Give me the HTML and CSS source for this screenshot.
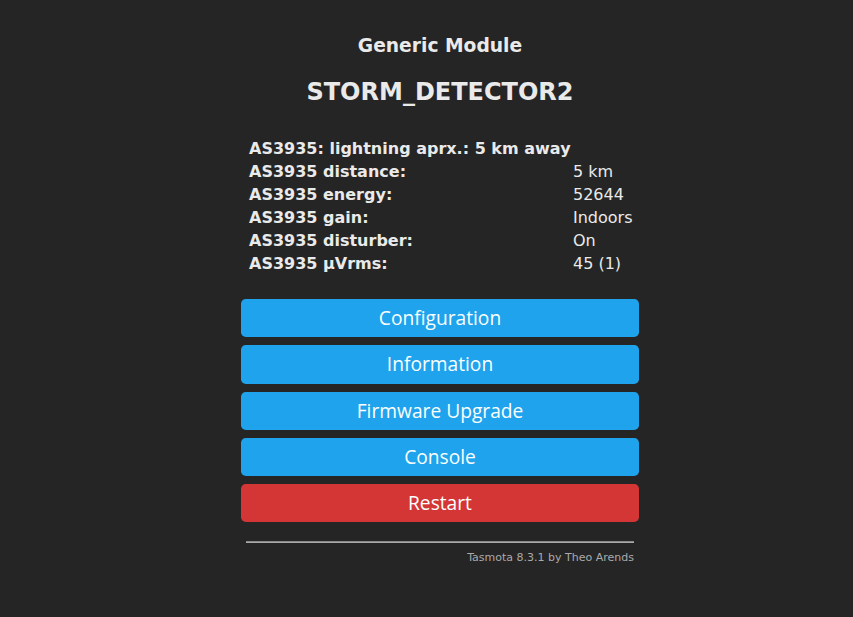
FILE: index.html
```html
<!DOCTYPE html>
<html lang="en">
<head>
  <meta charset="UTF-8" />
  <meta name="viewport" content="width=device-width, initial-scale=1.0"/>
  <title>STORM_DETECTOR2 - Main Menu</title>
  <link rel="stylesheet" href="styles.css">
</head>

<body>
  <div class="main">
    <div class="head">
      <h3>Generic Module</h3>
      <h2>STORM_DETECTOR2</h2>
    </div>

    <div class="sensors">
      <div class="full">AS3935: lightning aprx.: 5 km away</div>
      <div class="row"><span class="key">AS3935 distance:</span><span class="val">5 km</span></div>
      <div class="row"><span class="key">AS3935 energy:</span><span class="val">52644</span></div>
      <div class="row"><span class="key">AS3935 gain:</span><span class="val">Indoors</span></div>
      <div class="row"><span class="key">AS3935 disturber:</span><span class="val">On</span></div>
      <div class="row"><span class="key">AS3935 µVrms:</span><span class="val">45 (1)</span></div>
    </div>

    <div class="menu">
      <button>Configuration</button>
      <button>Information</button>
      <button>Firmware Upgrade</button>
      <button>Console</button>
      <button class="bred">Restart</button>
    </div>

    <div class="footer">
      <hr>
      <a href="#">Tasmota 8.3.1 by Theo Arends</a>
    </div>
  </div>
</body>
</html>
```

FILE: styles.css
```css
body {
  margin: 0;
  padding: 0 0 0 27px;
  background-color: #252525;
  font-family: "DejaVu Sans", Verdana, sans-serif;
  color: #eaeaea;
}

.main {
  width: 398px;
  margin: 0 auto;
}

.head {
  text-align: center;
  padding-top: 35px;
}

h3 {
  margin: 0;
  font-size: 18.7px;
  line-height: 22px;
}

h2 {
  margin: 21px 0 0;
  font-size: 24px;
  line-height: 28px;
}

.sensors {
  margin-top: 31px;
  padding-left: 8px;
  font-size: 16px;
  line-height: 23px;
}

.full,
.key {
  font-weight: bold;
}

.row {
  display: grid;
  grid-template-columns: 324px 1fr;
}

.menu {
  margin-top: 24px;
  display: flex;
  flex-direction: column;
  gap: 7.85px;
}

.menu button {
  border: 0;
  border-radius: 0.3rem;
  background: #1fa3ec;
  color: #faffff;
  line-height: 2.4rem;
  font-size: 1.2rem;
  font-family: "Open Sans", "Noto Sans", sans-serif;
  width: 100%;
  padding: 0;
  cursor: pointer;
}

.menu button.bred {
  background: #d43535;
}

.footer {
  margin-top: 19px;
  padding: 0 5px;
  text-align: right;
  font-size: 11px;
}

.footer hr {
  margin: 0 0 8px;
  border: 0;
  border-top: 1px solid #8a8a8a;
  border-bottom: 1px solid #a8a8a8;
}

.footer a {
  color: #aaa;
  text-decoration: none;
}
```
